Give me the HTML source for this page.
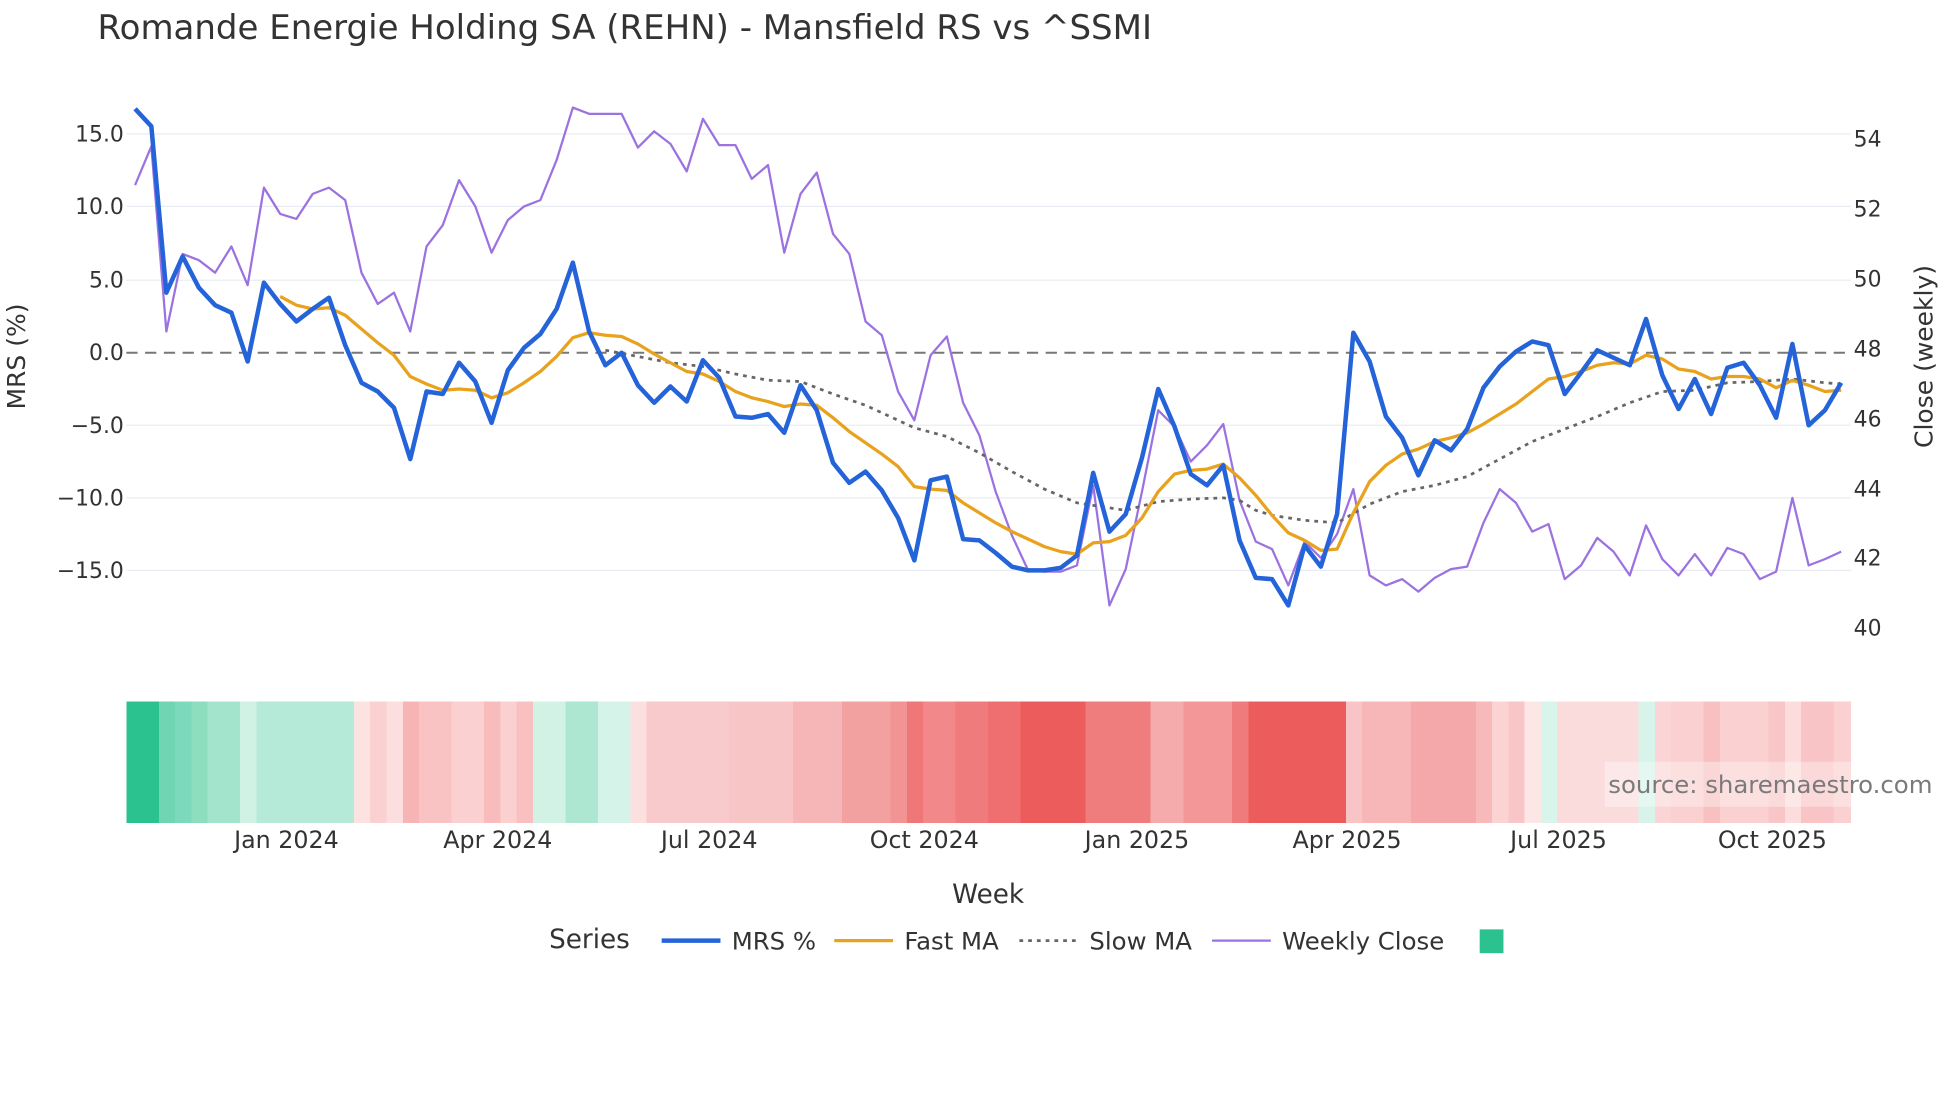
<!DOCTYPE html>
<html><head><meta charset="utf-8"><style>
html,body{margin:0;padding:0;background:#fff;}
svg{display:block;}
text{font-family:"DejaVu Sans","Liberation Sans",sans-serif;fill:#2a3f5f;}
</style></head><body>
<svg width="1960" height="1102" viewBox="0 0 1567 881" preserveAspectRatio="none" xmlns="http://www.w3.org/2000/svg">
<rect width="1567" height="881" fill="#fff"/>
<text x="78" y="31" font-size="27" textLength="843" lengthAdjust="spacingAndGlyphs" style="fill:#333">Romande Energie Holding SA (REHN) - Mansfield RS vs ^SSMI</text>
<g stroke="#e9edf3" stroke-width="1">
<line x1="101" x2="1480" y1="107" y2="107"/><line x1="101" x2="1480" y1="165" y2="165"/><line x1="101" x2="1480" y1="224" y2="224"/><line x1="101" x2="1480" y1="340" y2="340"/><line x1="101" x2="1480" y1="398" y2="398"/><line x1="101" x2="1480" y1="456" y2="456"/>
</g>
<line x1="101" x2="1480" y1="282" y2="282" stroke="#777" stroke-width="1.6" stroke-dasharray="9,6"/>
<g font-size="17.5" text-anchor="end" style="fill:#333">
<text x="99" y="113" style="fill:#333">15.0</text><text x="99" y="171" style="fill:#333">10.0</text><text x="99" y="230" style="fill:#333">5.0</text><text x="99" y="288" style="fill:#333">0.0</text><text x="99" y="346" style="fill:#333">−5.0</text><text x="99" y="404" style="fill:#333">−10.0</text><text x="99" y="462" style="fill:#333">−15.0</text>
</g>
<g font-size="17.5" style="fill:#333">
<text x="1482" y="117" style="fill:#333">54</text><text x="1482" y="173" style="fill:#333">52</text><text x="1482" y="229" style="fill:#333">50</text><text x="1482" y="285" style="fill:#333">48</text><text x="1482" y="341" style="fill:#333">46</text><text x="1482" y="397" style="fill:#333">44</text><text x="1482" y="452" style="fill:#333">42</text><text x="1482" y="508" style="fill:#333">40</text>
</g>
<text transform="translate(20,285) rotate(-90)" text-anchor="middle" font-size="20" style="fill:#333">MRS (%)</text>
<text transform="translate(1545,285) rotate(-90)" text-anchor="middle" font-size="20" style="fill:#333">Close (weekly)</text>
<polyline fill="none" stroke="#9b72e0" stroke-width="1.8" stroke-linejoin="round" points="108,148 121,117 133,265 146,203 159,208 172,218 185,197 198,228 211,150 224,171 237,175 250,155 263,150 276,160 289,218 302,243 315,234 328,265 341,197 354,180 367,144 380,165 393,202 406,176 419,165 432,160 445,128 458,86 471,91 484,91 497,91 510,118 523,105 536,115 549,137 562,95 575,116 588,116 601,143 614,132 627,202 640,155 653,138 666,187 679,203 692,257 705,268 718,313 731,336 744,284 757,269 770,322 783,348 796,393 809,428 822,456 835,457 848,457 861,452 874,388 887,484 900,455 913,393 926,328 939,341 952,369 965,356 978,339 991,400 1004,433 1017,439 1030,468 1043,433 1056,446 1069,427 1082,391 1095,460 1108,468 1121,463 1134,473 1147,462 1160,455 1173,453 1186,418 1199,391 1212,402 1225,425 1238,419 1251,463 1264,452 1277,430 1290,441 1303,460 1316,420 1329,447 1342,460 1355,443 1368,460 1381,438 1394,443 1407,463 1420,457 1433,398 1446,452 1459,447 1472,441"/>
<polyline fill="none" stroke="#666" stroke-width="2.2" stroke-dasharray="3,4" points="484,280 510,285 536,290 562,293 588,299 614,304 640,305 666,315 692,324 718,336 731,342 757,349 783,362 809,377 835,391 861,402 874,404 900,408 926,401 952,399 978,398 991,400 1004,408 1017,412 1043,416 1069,418 1095,403 1121,393 1147,388 1173,381 1199,367 1225,353 1251,343 1277,333 1303,322 1329,313 1355,312 1381,306 1407,305 1433,303 1459,306 1472,307"/>
<polyline fill="none" stroke="#e8a21d" stroke-width="2.6" stroke-linejoin="round" points="224,237 237,244 250,247 263,246 276,252 289,263 302,274 315,284 328,301 341,307 354,312 367,311 380,312 393,318 406,314 419,306 432,297 445,285 458,270 471,266 484,268 497,269 510,275 523,283 536,290 549,297 562,299 575,305 588,313 601,318 614,321 627,325 640,323 653,324 666,334 679,345 692,354 705,363 718,373 731,389 744,391 757,392 770,402 783,410 796,418 809,425 822,431 835,437 848,441 861,443 874,434 887,433 900,428 913,414 926,393 939,379 952,376 965,375 978,371 991,382 1004,396 1017,412 1030,426 1043,432 1056,440 1069,439 1082,410 1095,385 1108,372 1121,363 1134,359 1147,353 1160,350 1173,346 1186,339 1199,331 1212,323 1225,313 1238,303 1251,301 1264,297 1277,292 1290,290 1303,291 1316,284 1329,287 1342,295 1355,297 1368,303 1381,301 1394,301 1407,303 1420,310 1433,304 1446,308 1459,313 1472,312"/>
<polyline fill="none" stroke="#2563d9" stroke-width="3.6" stroke-linejoin="round" points="108,87 121,101 133,234 146,205 159,230 172,244 185,250 198,289 211,226 224,243 237,257 250,247 263,238 276,276 289,306 302,313 315,326 328,367 341,313 354,315 367,290 380,305 393,338 406,296 419,278 432,267 445,247 458,210 471,265 484,292 497,282 510,308 523,322 536,309 549,321 562,288 575,302 588,333 601,334 614,331 627,346 640,308 653,328 666,370 679,386 692,377 705,392 718,414 731,448 744,384 757,381 770,431 783,432 796,442 809,453 822,456 835,456 848,454 861,444 874,378 887,425 900,411 913,366 926,311 939,341 952,379 965,388 978,372 991,432 1004,462 1017,463 1030,484 1043,436 1056,453 1069,411 1082,266 1095,289 1108,333 1121,350 1134,380 1147,352 1160,360 1173,343 1186,310 1199,293 1212,281 1225,273 1238,276 1251,315 1264,298 1277,280 1290,286 1303,292 1316,255 1329,300 1342,327 1355,303 1368,331 1381,294 1394,290 1407,308 1420,334 1433,275 1446,340 1459,328 1472,306"/>
<g shape-rendering="crispEdges">
<rect x="101" y="561" width="26" height="97" fill="#2bc28f"/>
<rect x="127" y="561" width="13" height="97" fill="#6fd5b3"/>
<rect x="140" y="561" width="13" height="97" fill="#7dd9bb"/>
<rect x="153" y="561" width="13" height="97" fill="#8ddebf"/>
<rect x="166" y="561" width="26" height="97" fill="#a3e4cd"/>
<rect x="192" y="561" width="13" height="97" fill="#cff2e5"/>
<rect x="205" y="561" width="78" height="97" fill="#b5ead8"/>
<rect x="283" y="561" width="13" height="97" fill="#fde2e2"/>
<rect x="296" y="561" width="13" height="97" fill="#fbd0d0"/>
<rect x="309" y="561" width="13" height="97" fill="#fcdede"/>
<rect x="322" y="561" width="13" height="97" fill="#f7b4b5"/>
<rect x="335" y="561" width="26" height="97" fill="#f9c3c4"/>
<rect x="361" y="561" width="26" height="97" fill="#fad0d0"/>
<rect x="387" y="561" width="13" height="97" fill="#f8bcbd"/>
<rect x="400" y="561" width="13" height="97" fill="#fbd0d0"/>
<rect x="413" y="561" width="13" height="97" fill="#f8c0c1"/>
<rect x="426" y="561" width="26" height="97" fill="#d3f2e6"/>
<rect x="452" y="561" width="26" height="97" fill="#ade6d1"/>
<rect x="478" y="561" width="26" height="97" fill="#d6f3e9"/>
<rect x="504" y="561" width="13" height="97" fill="#fce0e0"/>
<rect x="517" y="561" width="66" height="97" fill="#f9cacb"/>
<rect x="583" y="561" width="51" height="97" fill="#f8c5c6"/>
<rect x="634" y="561" width="39" height="97" fill="#f6b6b7"/>
<rect x="673" y="561" width="39" height="97" fill="#f3a0a0"/>
<rect x="712" y="561" width="13" height="97" fill="#f29494"/>
<rect x="725" y="561" width="13" height="97" fill="#ef7777"/>
<rect x="738" y="561" width="26" height="97" fill="#f28889"/>
<rect x="764" y="561" width="26" height="97" fill="#f07b7c"/>
<rect x="790" y="561" width="26" height="97" fill="#ef6f70"/>
<rect x="816" y="561" width="52" height="97" fill="#ed5c5c"/>
<rect x="868" y="561" width="52" height="97" fill="#f07d7e"/>
<rect x="920" y="561" width="26" height="97" fill="#f5aaab"/>
<rect x="946" y="561" width="39" height="97" fill="#f39798"/>
<rect x="985" y="561" width="13" height="97" fill="#f07b7c"/>
<rect x="998" y="561" width="78" height="97" fill="#ed5c5c"/>
<rect x="1076" y="561" width="13" height="97" fill="#f8c4c5"/>
<rect x="1089" y="561" width="39" height="97" fill="#f7b7b8"/>
<rect x="1128" y="561" width="52" height="97" fill="#f5a8a9"/>
<rect x="1180" y="561" width="13" height="97" fill="#f7b9b9"/>
<rect x="1193" y="561" width="13" height="97" fill="#fbd3d3"/>
<rect x="1206" y="561" width="13" height="97" fill="#f9c6c7"/>
<rect x="1219" y="561" width="13" height="97" fill="#fde6e6"/>
<rect x="1232" y="561" width="13" height="97" fill="#d9f4ea"/>
<rect x="1245" y="561" width="65" height="97" fill="#fbdcdc"/>
<rect x="1310" y="561" width="13" height="97" fill="#d8f3ea"/>
<rect x="1323" y="561" width="13" height="97" fill="#fbd5d6"/>
<rect x="1336" y="561" width="26" height="97" fill="#fad0d0"/>
<rect x="1362" y="561" width="13" height="97" fill="#f8c0c1"/>
<rect x="1375" y="561" width="39" height="97" fill="#fad0d0"/>
<rect x="1414" y="561" width="13" height="97" fill="#f8c6c6"/>
<rect x="1427" y="561" width="13" height="97" fill="#fcdcdc"/>
<rect x="1440" y="561" width="26" height="97" fill="#f9c4c5"/>
<rect x="1466" y="561" width="14" height="97" fill="#fad0d0"/>
</g>
<rect x="1283" y="609" width="262" height="36" fill="#fff" fill-opacity="0.35"/>
<text x="1545" y="634" text-anchor="end" font-size="19.5" style="fill:#7a7a7a">source: sharemaestro.com</text>
<g font-size="19" text-anchor="middle" style="fill:#333">
<text x="229" y="678" style="fill:#333">Jan 2024</text><text x="398" y="678" style="fill:#333">Apr 2024</text><text x="567" y="678" style="fill:#333">Jul 2024</text><text x="739" y="678" style="fill:#333">Oct 2024</text><text x="909" y="678" style="fill:#333">Jan 2025</text><text x="1077" y="678" style="fill:#333">Apr 2025</text><text x="1246" y="678" style="fill:#333">Jul 2025</text><text x="1417" y="678" style="fill:#333">Oct 2025</text>
</g>
<text x="790" y="722" text-anchor="middle" font-size="21" style="fill:#333">Week</text>
<text x="439" y="758" font-size="21" style="fill:#333">Series</text>
<line x1="529" x2="576" y1="752" y2="752" stroke="#2563d9" stroke-width="3.6"/>
<text x="585" y="759" font-size="19.5" style="fill:#333">MRS %</text>
<line x1="667" x2="714" y1="752" y2="752" stroke="#e8a21d" stroke-width="2.6"/>
<text x="723" y="759" font-size="19.5" style="fill:#333">Fast MA</text>
<line x1="815" x2="862" y1="752" y2="752" stroke="#666" stroke-width="2.2" stroke-dasharray="3,4"/>
<text x="871" y="759" font-size="19.5" style="fill:#333">Slow MA</text>
<line x1="969" x2="1016" y1="752" y2="752" stroke="#9b72e0" stroke-width="1.8"/>
<text x="1025" y="759" font-size="19.5" style="fill:#333">Weekly Close</text>
<rect x="1183" y="743" width="19" height="19" fill="#2bc28f"/>
</svg>
</body></html>
